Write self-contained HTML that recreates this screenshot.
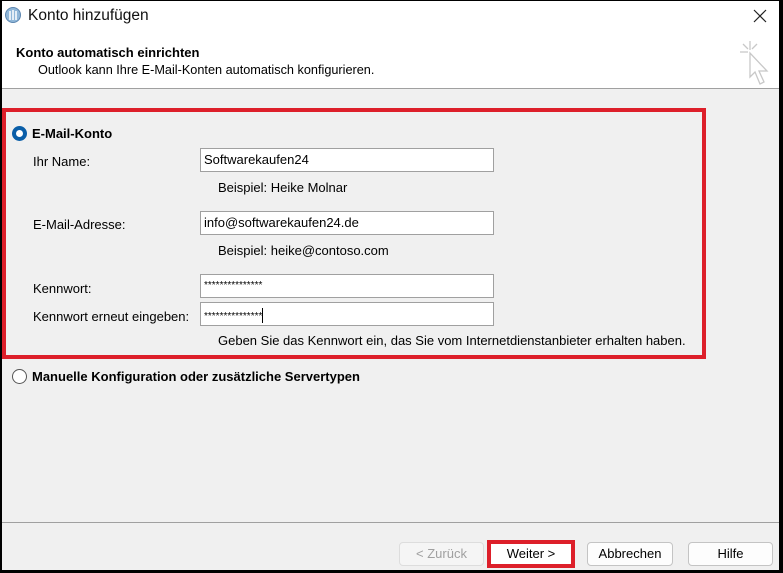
<!DOCTYPE html>
<html><head><meta charset="utf-8"><style>
*{margin:0;padding:0;box-sizing:border-box}
body{width:783px;height:573px;background:#000;position:relative;overflow:hidden;font-family:"Liberation Sans",sans-serif;font-size:13px;color:#000}
#win{position:absolute;left:2px;top:1px;width:777px;height:569px;background:#f0f0f0}
.a{position:absolute;white-space:nowrap}
.inp{position:absolute;background:#fff;border:1px solid #a0a0a0;height:24px;width:294px;left:198px;padding:3px 3px;font-size:13px}
.btn{position:absolute;top:541px;height:24px;background:#fdfdfd;border:1px solid #c4c4c4;border-radius:4px;text-align:center;line-height:22px;font-size:13px}
</style></head><body>
<div id="win">
<div class="a" style="left:0;top:0;width:777px;height:88px;background:#fff;border-bottom:1px solid #a0a0a0"></div>
<svg class="a" style="left:2px;top:5px" width="18" height="18"><circle cx="9" cy="9" r="7.5" fill="#8fb6d8" stroke="#5c86b0"/><path d="M6 5v9M9 4v10M12 5v9" stroke="#fff" stroke-width="1.5"/></svg>
<div class="a" style="left:26px;top:6px;font-size:15.5px;color:#111">Konto hinzufügen</div>
<svg class="a" style="left:751px;top:8px" width="14" height="14"><path d="M1 1L13 13M13 1L1 13" stroke="#222" stroke-width="1.2"/></svg>
<div class="a" style="left:14px;top:44px;font-weight:bold;font-size:13px">Konto automatisch einrichten</div>
<div class="a" style="left:36px;top:62px;font-size:12.7px">Outlook kann Ihre E-Mail-Konten automatisch konfigurieren.</div>
<svg class="a" style="left:735px;top:38px" width="40" height="50" fill="none" stroke="#c8c8c8" stroke-width="1.3"><path d="M13 2v9M3 13h8M6 5l5 5M20 5l-5 5"/><path d="M13 14v24l5-5l5 12l4-2l-5-11l8 0z"/></svg>
<div class="a" style="left:0;top:107px;width:704px;height:251px;border:4px solid #dd1f2a"></div>
<div class="a" style="left:10px;top:125px;width:15px;height:15px;border-radius:50%;background:#0a5ea8"><div style="margin:4px;width:7px;height:7px;border-radius:50%;background:#fff"></div></div>
<div class="a" style="left:30px;top:125px;font-weight:bold;font-size:13px">E-Mail-Konto</div>
<div class="a" style="left:31px;top:153px">Ihr Name:</div>
<div class="inp" style="top:147px">Softwarekaufen24</div>
<div class="a" style="left:216px;top:179px">Beispiel: Heike Molnar</div>
<div class="a" style="left:31px;top:216px">E-Mail-Adresse:</div>
<div class="inp" style="top:210px">info@softwarekaufen24.de</div>
<div class="a" style="left:216px;top:242px">Beispiel: heike@contoso.com</div>
<div class="a" style="left:31px;top:280px">Kennwort:</div>
<div class="inp" style="top:273px;font-size:10px;padding-top:5px">***************</div>
<div class="a" style="left:31px;top:308px">Kennwort erneut eingeben:</div>
<div class="inp" style="top:301px;font-size:10px;padding-top:5px">***************<span style="display:inline-block;width:1px;height:15px;background:#000;vertical-align:-4px"></span></div>
<div class="a" style="left:216px;top:332px;font-size:13px">Geben Sie das Kennwort ein, das Sie vom Internetdienstanbieter erhalten haben.</div>
<div class="a" style="left:10px;top:368px;width:15px;height:15px;border-radius:50%;border:1px solid #555;background:#fff"></div>
<div class="a" style="left:30px;top:368px;font-weight:bold;font-size:13px">Manuelle Konfiguration oder zusätzliche Servertypen</div>
<div class="a" style="left:0;top:521px;width:777px;height:1px;background:#a0a0a0"></div>
<div class="btn" style="left:397px;width:85px;color:#a0a0a0;background:#f5f5f5;border-color:#ddd">&lt; Zurück</div>
<div class="btn" style="left:485px;width:88px;top:539px;height:28px;border:4px solid #dd1f2a;border-radius:0;line-height:20px;background:#fff">Weiter &gt;</div>
<div class="btn" style="left:585px;width:86px">Abbrechen</div>
<div class="btn" style="left:686px;width:85px">Hilfe</div>
</div>
</body></html>
